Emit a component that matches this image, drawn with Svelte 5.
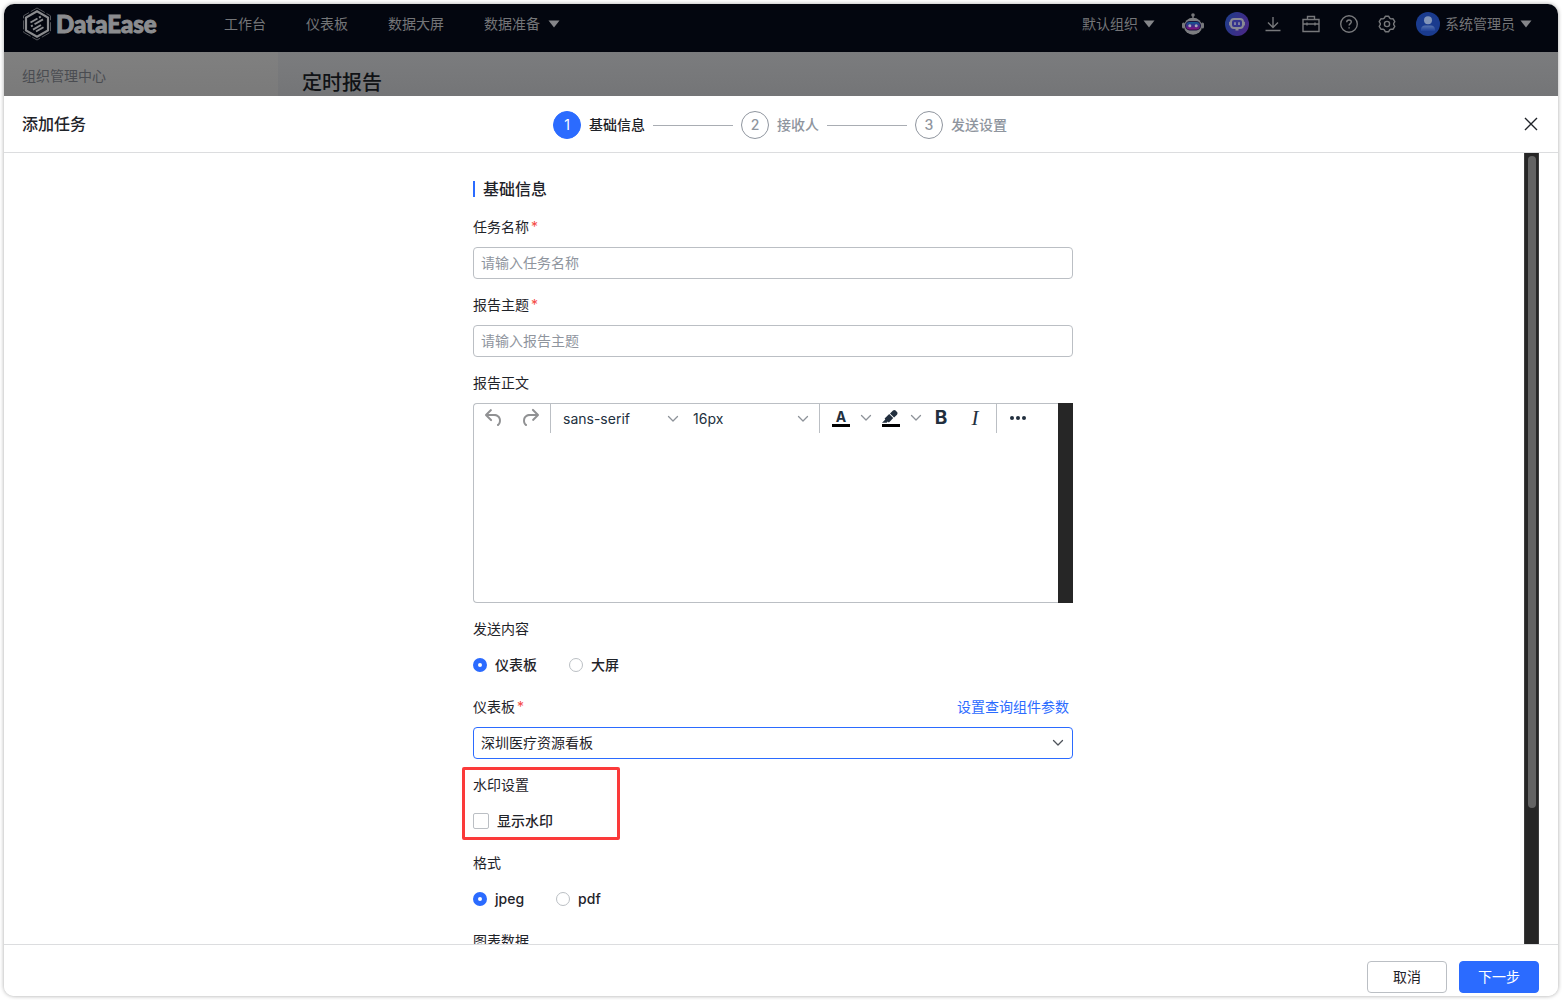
<script>
  const navItems = ['工作台', '仪表板', '数据大屏'];
  const steps = ['基础信息', '接收人', '发送设置'];
  let content = $state('dashboard');
  let format = $state('jpeg');
  let watermark = $state(false);
</script>

{#snippet caret()}
  <svg class="caret" width="12" height="8" viewBox="0 0 12 8" aria-hidden="true"><path d="M0.5 0.5h11L6 7.5z" fill="currentColor" /></svg>
{/snippet}

{#snippet chevron()}
  <svg width="12" height="8" viewBox="0 0 12 8" aria-hidden="true"><path d="M1.5 1.5 6 6l4.500-4.500" fill="none" stroke="currentColor" stroke-width="1.300" stroke-linecap="round" stroke-linejoin="round" /></svg>
{/snippet}

<div class="window">
  <header class="topbar">
    <a class="logo" href="#home">
      <svg width="30" height="34" viewBox="0 0 30 34" fill="none" aria-hidden="true">
        <path d="M15 1 28.500 8.800v16.400L15 33 1.500 25.200V8.800z" stroke="#55575c" stroke-width="1" stroke-dasharray="9 2" />
        <path d="M15 4.200 26 10.600v12.800L15 29.800 4 23.400V10.600z" stroke="#8b8c8f" stroke-width="2.200" />
        <path d="m8.500 15.500 7-4M17 10.700l1.800-1M9 19.300l1.800-1M12.500 17.300l8.500-4.900M11 22.600l8-4.600M14 24.500l7.500-4.300" stroke="#8b8c8f" stroke-width="1.900" />
      </svg>
      <span>DataEase</span>
    </a>
    <nav class="nav">
      {#each navItems as item}<a href="#nav">{item}</a>{/each}
      <a class="menu" href="#nav">数据准备 {@render caret()}</a>
    </nav>
    <div class="tools">
      <button class="org">默认组织 {@render caret()}</button>
      <button class="robot" aria-label="智能助手">
        <svg width="22" height="22" viewBox="0 0 22 22" aria-hidden="true">
          <defs><linearGradient id="visor" x1="0" y1="0" x2="0" y2="1"><stop offset="0" stop-color="#105a90" /><stop offset="0.500" stop-color="#3c2a8c" /><stop offset="1" stop-color="#8a0f7c" /></linearGradient></defs>
          <circle cx="11" cy="2" r="1.800" fill="#77787b" />
          <path d="M10.300 3h1.400v3h-1.400z" fill="#77787b" />
          <rect x="0" y="9.500" width="3" height="6" rx="1.500" fill="#77787b" />
          <rect x="19" y="9.500" width="3" height="6" rx="1.500" fill="#77787b" />
          <ellipse cx="11" cy="13.200" rx="9" ry="8.500" fill="#7c7d80" />
          <rect x="3" y="8" width="16" height="9.500" rx="4.700" fill="#1b1440" />
          <rect x="4" y="9" width="14" height="7.500" rx="3.700" fill="url(#visor)" />
          <circle cx="7.800" cy="12.700" r="1.500" fill="#a9a9b8" /><circle cx="14.200" cy="12.700" r="1.500" fill="#a9a9b8" />
        </svg>
      </button>
      <button class="bot" aria-label="智能问数">
        <svg width="24" height="24" viewBox="0 0 24 24" aria-hidden="true">
          <defs><linearGradient id="disc" x1="0" y1="0.300" x2="1" y2="0.700"><stop offset="0" stop-color="#203b8a" /><stop offset="1" stop-color="#4a2786" /></linearGradient></defs>
          <circle cx="12" cy="12" r="12" fill="url(#disc)" />
          <rect x="6" y="7" width="12" height="9" rx="3" fill="#34338d" stroke="#8a8a94" stroke-width="2" />
          <path d="M4.800 9.800v3.600M19.200 9.800v3.600M10.500 17.700h3" stroke="#8a8a94" stroke-width="1.500" />
          <path d="M10 10.300v2.600M14 10.300v2.600" stroke="#9a9aa8" stroke-width="1.500" />
        </svg>
      </button>
      <button class="tool" aria-label="下载">
        <svg width="18" height="18" viewBox="0 0 18 18" aria-hidden="true"><path d="M9 2v10M4 7.500l5 5 5-5M1.500 15.500h15" /></svg>
      </button>
      <button class="tool" aria-label="工具箱">
        <svg width="18" height="18" viewBox="0 0 18 18" aria-hidden="true"><path d="M1 4.500h16v12H1zM5.500 4.500V1.500h7v3M1 9h16M5 7.500v3M13 7.500v3" /></svg>
      </button>
      <button class="tool" aria-label="帮助">
        <svg width="18" height="18" viewBox="0 0 18 18" aria-hidden="true"><circle cx="9" cy="9" r="8.300" /><path d="M6.700 7.200c0-1.400 1-2.200 2.300-2.200s2.300.8 2.300 2c0 1.600-2.200 1.700-2.200 3.600M9.100 12.200v1.300" /></svg>
      </button>
      <button class="tool" aria-label="设置">
        <svg width="18" height="18" viewBox="0 0 18 18" aria-hidden="true"><path d="M7.300 1.300h3.400l1 1.900 1.300.7 2.100-.1 1.700 2.900-1.100 1.700v1.200l1.100 1.700-1.700 2.900-2.100-.1-1.300.7-1 1.900H7.300l-1-1.900-1.300-.7-2.100.1-1.700-2.900 1.100-1.700V8.400L1.200 6.700l1.700-2.900 2.100.1 1.300-.7z" stroke-linejoin="round" /><circle cx="9" cy="9" r="2.600" /></svg>
      </button>
      <button class="user">
        <svg width="24" height="24" viewBox="0 0 24 24" aria-hidden="true">
          <defs><linearGradient id="bust" x1="0" y1="0" x2="0" y2="1"><stop offset="0" stop-color="#5673ad" /><stop offset="1" stop-color="#1f4199" /></linearGradient></defs>
          <circle cx="12" cy="12" r="12" fill="#1a3b8e" /><circle cx="12" cy="8.300" r="4" fill="#8295b8" />
          <path d="M5 19v-1.500c0-2.500 2-4 4-4h6c2 0 4 1.500 4 4V19z" fill="url(#bust)" />
        </svg>
        系统管理员 {@render caret()}
      </button>
    </div>
  </header>

  <div class="behind">
    <aside>组织管理中心</aside>
    <h1>定时报告</h1>
  </div>

  <section class="drawer" role="dialog" aria-labelledby="drawer-title">
    <div class="drawer-head">
      <h2 id="drawer-title">添加任务</h2>
      <ol class="steps">
        {#each steps as step, i}
          <li class:active={i === 0}><span class="num">{i + 1}</span><span>{step}</span></li>
        {/each}
      </ol>
      <button class="close" aria-label="关闭">
        <svg width="14" height="14" viewBox="0 0 14 14" aria-hidden="true"><path d="m1 1 12 12M13 1 1 13" stroke="currentColor" stroke-width="1.400" /></svg>
      </button>
    </div>

    <div class="drawer-body">
      <div class="scroll">
        <form id="task">
          <h3>基础信息</h3>
          <div class="item">
            <label for="name">任务名称<i>*</i></label>
            <input class="text" id="name" type="text" placeholder="请输入任务名称" />
          </div>
          <div class="item">
            <label for="subject">报告主题<i>*</i></label>
            <input class="text" id="subject" type="text" placeholder="请输入报告主题" />
          </div>
          <div class="item">
            <label for="body">报告正文</label>
            <div class="editor">
              <div class="editor-main">
                <div class="toolbar">
                  <div class="group narrow">
                    <button type="button" class="wide faded" aria-label="撤销"><svg width="24" height="24" viewBox="0 0 24 24"><path d="M6.400 8H12c3.700 0 6.200 2 6.800 5.100.6 2.700-.4 5.600-2.300 6.800a1 1 0 0 1-1-1.800c1.100-.6 1.800-2.700 1.400-4.600-.5-2.100-2.100-3.500-4.900-3.500H6.400l3.300 3.300a1 1 0 1 1-1.400 1.400l-5-5a1 1 0 0 1 0-1.400l5-5a1 1 0 0 1 1.400 1.400L6.400 8Z" fill="currentColor" /></svg></button>
                    <button type="button" class="wide faded" aria-label="重做"><svg width="24" height="24" viewBox="0 0 24 24"><path d="M17.600 10H12c-2.800 0-4.400 1.400-4.900 3.500-.4 2 .3 4 1.400 4.600a1 1 0 1 1-1 1.800c-2-1.200-2.900-4.100-2.300-6.800.6-3 3-5.100 6.800-5.100h5.600l-3.300-3.300a1 1 0 1 1 1.400-1.400l5 5a1 1 0 0 1 0 1.400l-5 5a1 1 0 0 1-1.400-1.400l3.300-3.300Z" fill="currentColor" /></svg></button>
                  </div>
                  <div class="group">
                    <button type="button" class="pick">sans-serif {@render chevron()}</button>
                    <button type="button" class="pick">16px {@render chevron()}</button>
                  </div>
                  <div class="group">
                    <button type="button" class="key" aria-label="文字颜色"><span class="letter-a">A</span></button>
                    <button type="button" class="drop" aria-label="选择文字颜色">{@render chevron()}</button>
                    <button type="button" class="key" aria-label="背景颜色"><svg width="24" height="24" viewBox="0 0 24 24"><path d="M3 18h18v3H3z" fill="#000" /><path d="M7.700 16.700H3l3.300-3.300-.7-.8L10.200 8l4 4.100-4 4.200c-.2.200-.6.200-.8 0l-.6-.7-1.100 1.100zm5-7.500L11 7.400l3-2.900a2 2 0 0 1 2.600 0L18 6c.7.700.7 2 0 2.700l-2.900 2.900-1.800-1.800-.5-.6" fill="currentColor" /></svg></button>
                    <button type="button" class="drop" aria-label="选择背景颜色">{@render chevron()}</button>
                    <button type="button" class="key bold" aria-label="粗体">B</button>
                    <button type="button" class="key italic" aria-label="斜体">I</button>
                  </div>
                  <div class="group last">
                    <button type="button" class="key" aria-label="更多"><svg width="24" height="24" viewBox="0 0 24 24"><g fill="currentColor"><circle cx="6" cy="12" r="2" /><circle cx="12" cy="12" r="2" /><circle cx="18" cy="12" r="2" /></g></svg></button>
                  </div>
                </div>
                <textarea id="body"></textarea>
              </div>
              <div class="editor-track"></div>
            </div>
          </div>
          <div class="item" role="radiogroup" aria-labelledby="content-label">
            <span class="label" id="content-label">发送内容</span>
            <div class="choices">
              <label><input type="radio" name="content" value="dashboard" bind:group={content} />仪表板</label>
              <label><input type="radio" name="content" value="screen" bind:group={content} />大屏</label>
            </div>
          </div>
          <div class="item">
            <div class="label-row">
              <label for="board">仪表板<i>*</i></label>
              <a href="#params">设置查询组件参数</a>
            </div>
            <div class="select">
              <select id="board"><option>深圳医疗资源看板</option></select>
              {@render chevron()}
            </div>
          </div>
          <div class="item marked" role="group" aria-labelledby="watermark-label">
            <span class="label" id="watermark-label">水印设置</span>
            <div class="choices">
              <label><input type="checkbox" bind:checked={watermark} />显示水印</label>
            </div>
          </div>
          <div class="item" role="radiogroup" aria-labelledby="format-label">
            <span class="label" id="format-label">格式</span>
            <div class="choices">
              <label><input type="radio" name="format" value="jpeg" bind:group={format} />jpeg</label>
              <label><input type="radio" name="format" value="pdf" bind:group={format} />pdf</label>
            </div>
          </div>
          <div class="item"><span class="label">图表数据</span></div>
        </form>
      </div>
      <div class="track"><div class="thumb"></div></div>
    </div>

    <footer>
      <button class="btn">取消</button>
      <button class="btn primary">下一步</button>
    </footer>
  </section>
</div>

<style>
  :global(body) {
    background: #fff;
    font-family: Inter, "Noto Sans CJK SC", sans-serif;
    font-size: 14px;
    line-height: 22px;
    color: #1f2329;
  }
  *, *::before, *::after { box-sizing: border-box; }
  button, input, select, textarea { font: inherit; color: inherit; }
  button { border: 0; padding: 0; background: none; cursor: pointer; }
  a { text-decoration: none; color: inherit; }
  h1, h2, h3, ol { margin: 0; padding: 0; font-weight: 500; }
  svg { display: block; flex: none; }

  .window {
    display: flex;
    flex-direction: column;
    height: calc(100vh - 8px);
    margin: 4px;
    border-radius: 10px;
    overflow: hidden;
    box-shadow: 0 0 4px rgba(0, 0, 0, 0.35);
  }
  .topbar {
    display: flex;
    align-items: center;
    height: 48px;
    flex: none;
    padding: 0 26px 8px 18px;
    background: #03060f;
    color: #747578;
  }
  .logo {
    display: flex;
    align-items: center;
    gap: 4px;
    width: 202px;
    font: 900 24px/32px Lato, sans-serif;
    color: #8b8c8f;
    -webkit-text-stroke: 1px #8b8c8f;
  }
  .nav { display: flex; gap: 40px; white-space: nowrap; }
  .menu, .org, .user { display: flex; align-items: center; white-space: nowrap; }
  .menu { gap: 8px; }
  .org { gap: 5px; }
  .caret { color: #85868a; }
  .tools { display: flex; align-items: center; margin-left: auto; }
  .robot { margin: 0 21px 0 27px; }
  .bot { margin-right: 5px; }
  .tool { display: grid; place-items: center; width: 38px; height: 24px; }
  .tool svg { fill: none; stroke: #77787b; stroke-width: 1.4; }
  .user { gap: 5px; margin-left: 10px; }

  .behind {
    display: flex;
    flex: none;
    height: 44px;
    background: linear-gradient(#7b7c7e, #747577);
  }
  .behind aside {
    width: 274px;
    padding: 13px 18px;
    background: linear-gradient(#808080, #7a7a7a);
    color: #4a4c51;
  }
  .behind h1 { padding: 18px 24px 0; font-size: 20px; line-height: 26px; color: #101215; }

  .drawer { display: flex; flex: 1; flex-direction: column; min-height: 0; background: #fff; }
  .drawer-head {
    display: grid;
    grid-template-columns: 1fr auto 1fr;
    align-items: center;
    padding: 13px 20px 13px 18px;
    border-bottom: 1px solid #dcdddf;
  }
  h2, h3 { font-size: 16px; line-height: 24px; }
  .steps { display: flex; gap: 8px; padding-top: 2px; list-style: none; color: #8f959e; }
  .steps li { display: flex; align-items: center; gap: 8px; white-space: nowrap; }
  .steps li + li::before { content: ""; width: 80px; height: 1px; background: #a9adb3; }
  .num {
    display: grid;
    place-items: center;
    width: 28px;
    height: 28px;
    border: 1px solid #8f959e;
    border-radius: 50%;
  }
  .steps .active { color: #1f2329; font-weight: 500; }
  .active .num { border-color: #2b6bff; background: #2b6bff; color: #fff; font-weight: 400; }
  .close { justify-self: end; }

  .drawer-body { display: flex; flex: 1; min-height: 0; padding: 0 19px 0 18px; }
  .scroll { flex: 1; overflow: hidden; padding-top: 24px; }
  .track { width: 15px; padding: 3px 2px; background: #262626; border: solid #3c3c3c; border-width: 0 1px; }
  .thumb { width: 8px; height: 83%; margin: 0 auto; border-radius: 4px; background: #636363; }

  form { width: 100%; max-width: 600px; margin: 0 auto; }
  h3 { display: flex; align-items: center; gap: 8px; margin-bottom: 15px; }
  h3::before { content: ""; width: 2px; height: 16px; background: #2b6bff; }
  .item { margin-bottom: 15px; }
  .item > label, .label { display: block; margin-bottom: 9px; }
  .label-row { display: flex; justify-content: space-between; margin-bottom: 9px; padding-right: 4px; }
  .label-row a { color: #2b6bff; }
  i { margin-left: 2px; font-style: normal; color: #f54a45; }
  .text, select {
    display: block;
    width: 100%;
    height: 32px;
    padding: 0 7px;
    border: 1px solid #bbbfc4;
    border-radius: 4px;
    background: #fff;
  }
  .text { padding-bottom: 2px; }
  .text::placeholder { color: #8f959e; opacity: 1; }
  .select { display: grid; align-items: center; }
  .select > :global(*) { grid-area: 1 / 1; }
  .select :global(svg) { justify-self: end; margin-right: 9px; pointer-events: none; color: #4e535a; }
  select { appearance: none; border-color: #2b6bff; }

  .editor { display: flex; height: 200px; }
  .editor-main {
    display: flex;
    flex: 1;
    flex-direction: column;
    min-width: 0;
    border: 1px solid #bbbfc4;
    border-right: 0;
    border-radius: 4px 0 0 4px;
  }
  .editor-track { width: 15px; background: #262626; }
  .toolbar { display: flex; height: 29px; color: #222f3e; }
  .group { display: flex; align-items: flex-start; padding: 0 4px; border-right: 1px solid #bbbfc4; }
  .narrow { padding: 0 2px; }
  .last { border: 0; }
  .toolbar button { display: grid; place-items: center; height: 28px; }
  .toolbar .wide { width: 36px; }
  .toolbar .faded { color: #909193; }
  .toolbar .key { width: 34px; }
  .toolbar .drop { width: 16px; }
  .toolbar .pick {
    display: flex;
    align-items: center;
    justify-content: space-between;
    width: 130px;
    padding: 2px 6px 0 8px;
  }
  .pick :global(svg), .drop :global(svg) { color: #8d9299; }
  .letter-a {
    width: 18px;
    border-bottom: 3px solid #000;
    font-size: 14px;
    line-height: 15px;
    font-weight: 700;
  }
  .toolbar .bold { font-size: 19px; font-weight: 700; }
  .toolbar .italic { font: italic 400 21px/24px "Liberation Serif", serif; }
  textarea { flex: 1; width: 100%; border: 0; padding: 8px; resize: none; outline: 0; background: none; }

  .choices { display: flex; align-items: center; gap: 32px; height: 32px; font-weight: 500; }
  .choices label { display: flex; align-items: center; gap: 8px; }
  .choices input {
    appearance: none;
    width: 14px;
    height: 14px;
    margin: 0;
    border: 1px solid #bbbfc4;
    border-radius: 50%;
    background: #fff;
  }
  .choices input[type="radio"]:checked { border: 5px solid #2b6bff; }
  .choices input[type="checkbox"] { width: 16px; height: 16px; border-radius: 2px; }
  .choices input[type="checkbox"]:checked { background: #2b6bff; }
  .marked { position: relative; }
  .marked::after {
    content: "";
    position: absolute;
    inset: -7px auto -3px -11px;
    width: 158px;
    border: 3px solid #fb3a3a;
    border-radius: 2px;
    pointer-events: none;
  }

  footer {
    display: flex;
    justify-content: flex-end;
    gap: 12px;
    padding: 16px 19px 3px;
    border-top: 1px solid #dcdddf;
  }
  .btn { width: 80px; height: 32px; border: 1px solid #bbbfc4; border-radius: 4px; }
  .primary { border-color: #2b6bff; background: #2b6bff; color: #fff; }
</style>
